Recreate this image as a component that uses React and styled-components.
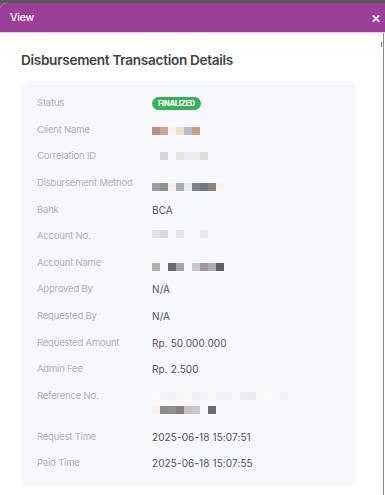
import React from "react";
import styled, { createGlobalStyle } from "styled-components";

const Global = createGlobalStyle`
  html, body { margin: 0; padding: 0; background: #ffffff; }
  body { font-family: Inter, "Open Sans", sans-serif; }
`;

const Page = styled.div`
  width: 385px;
  height: 495px;
  background: #5b5b5d;
  padding-top: 3px;
  box-sizing: border-box;
  overflow: hidden;
`;

const Modal = styled.div`
  height: 492px;
  background: #ffffff;
  border-top-left-radius: 6px;
  overflow: hidden;
  display: flex;
  flex-direction: column;
`;

const Header = styled.div`
  height: 29px;
  flex: none;
  background: #9b3f98;
  border-bottom: 1px solid #e9c6e6;
  display: flex;
  align-items: center;
  justify-content: space-between;
  padding: 0 4px 0 10px;
  color: #ffffff;
`;

const HeaderTitle = styled.span`
  font-size: 10.5px;
  font-weight: 500;
  letter-spacing: -0.2px;
`;

const CloseBtn = styled.span`
  font-size: 15px;
  line-height: 1;
  font-weight: 500;
`;

const Body = styled.div`
  flex: 1;
  display: flex;
  flex-direction: column;
  padding: 16px 0 0 21px;
  border-right: 1px solid #8a8a8a;
  margin-right: 1px;
  position: relative;
`;

const Title = styled.h2`
  margin: 0 0 10px;
  font-size: 13.6px;
  font-weight: 600;
  color: #434345;
  letter-spacing: -0.3px;
  line-height: 22px;
`;

const Card = styled.div`
  width: 335px;
  box-sizing: border-box;
  background: #f7f8fc;
  border-radius: 8px;
  padding: 15px 16px 16px;
  display: flex;
  flex-direction: column;
  gap: 12.65px;
`;

const Row = styled.div`
  display: grid;
  grid-template-columns: 115px 1fr;
  align-items: start;
  min-height: 14px;
  font-size: 9.5px;
  line-height: 14px;
`;

const Label = styled.span`
  color: #b0b0b5;
  letter-spacing: -0.2px;
`;

const Value = styled.span`
  color: #505054;
  font-size: 10px;
  letter-spacing: 0.1px;
  display: flex;
  flex-direction: column;
`;

const Badge = styled.span`
  justify-self: start;
  background: #34b257;
  color: #ffffff;
  font-size: 7.5px;
  font-weight: 800;
  letter-spacing: -0.3px;
  border-radius: 7px;
  padding: 0 6px;
  height: 13px;
  line-height: 13px;
  margin-top: 0.5px;
`;

const Pixels = styled.span`
  display: flex;
  height: 14px;
  align-items: center;
  transform: translateY(${(p) => p.$shift || 0}px);
`;

const Px = styled.span`
  width: 8px;
  height: 8px;
  background: ${(p) => p.$c};
  flex: none;
`;

const ScrollTick = styled.span`
  position: absolute;
  right: 1px;
  top: 9px;
  width: 1px;
  height: 5px;
  background: #777;
`;

const P = "transparent";

const Blur = ({ colors, shift }) => (
  <Pixels $shift={shift}>
    {colors.map((c, i) => (
      <Px key={i} $c={c} />
    ))}
  </Pixels>
);

const rows = [
  { label: "Status", badge: "FINALIZED" },
  { label: "Client Name", blur: [["#b98f80", "#c9a88e", "#f3f2f2", "#efe4c6", "#b3bfcc", "#c4a088"]], shift: 1 },
  { label: "Correlation ID", blur: [[P, "#d2d5dd", P, "#e3e3e5", "#eceef5", "#ebebee", "#dcdcde"]], shift: 0 },
  {
    label: "Disbursement Method",
    blur: [["#9b9b9d", "#8f8f91", "#f7efe8", "#a8acad", "#e8eef1", "#7b8191", "#6f7889", "#8b8181", "#f8f1ea"]],
    shift: 4,
  },
  { label: "Bank", text: "BCA" },
  { label: "Account No.", blur: [["#e0e0e5", "#dadade", P, "#e3e3e8", P, P, "#e8e8ec"]], shift: -2 },
  {
    label: "Account Name",
    blur: [["#b0b0b1", P, "#6b6b6f", "#a2a6a6", P, "#c5c8cd", "#a19595", "#b0aaa8", "#616167"]],
    shift: 4,
  },
  { label: "Approved By", text: "N/A" },
  { label: "Requested By", text: "N/A" },
  { label: "Requested Amount", text: "Rp. 50.000.000" },
  { label: "Admin Fee", text: "Rp. 2.500" },
  {
    label: "Reference No.",
    blur: [
      ["#fbfbfd", "#f8f1ee", "#eef1f7", "#f5f5f8", "#f7f7fa", "#eef0f5", "#f3f3f6", "#f7f7fa", "#eef1f7", "#f1f2f6", "#f7f8fb", "#eceef4", "#eaeaee", "#f8f8fb", "#fbfbfd", "#f9f9fb", "#f1f1f5"],
      ["#f8f1ea", "#8a8a8c", "#8e8e90", "#808082", "#c9c1b9", "#c9c9cd", P, "#6c6c70"],
    ],
    shift: 0,
  },
  { label: "Request Time", text: "2025-06-18 15:07:51" },
  { label: "Paid Time", text: "2025-06-18 15:07:55" },
];

export default function App() {
  return (
    <>
      <Global />
      <Page>
        <Modal>
          <Header>
            <HeaderTitle>View</HeaderTitle>
            <CloseBtn>×</CloseBtn>
          </Header>
          <Body>
            <ScrollTick />
            <Title>Disbursement Transaction Details</Title>
            <Card>
              {rows.map((r) => (
                <Row key={r.label}>
                  <Label>{r.label}</Label>
                  {r.badge ? (
                    <Badge>{r.badge}</Badge>
                  ) : r.text ? (
                    <Value>{r.text}</Value>
                  ) : (
                    <Value>
                      {r.blur.map((line, i) => (
                        <Blur key={i} colors={line} shift={r.shift} />
                      ))}
                    </Value>
                  )}
                </Row>
              ))}
            </Card>
          </Body>
        </Modal>
      </Page>
    </>
  );
}
